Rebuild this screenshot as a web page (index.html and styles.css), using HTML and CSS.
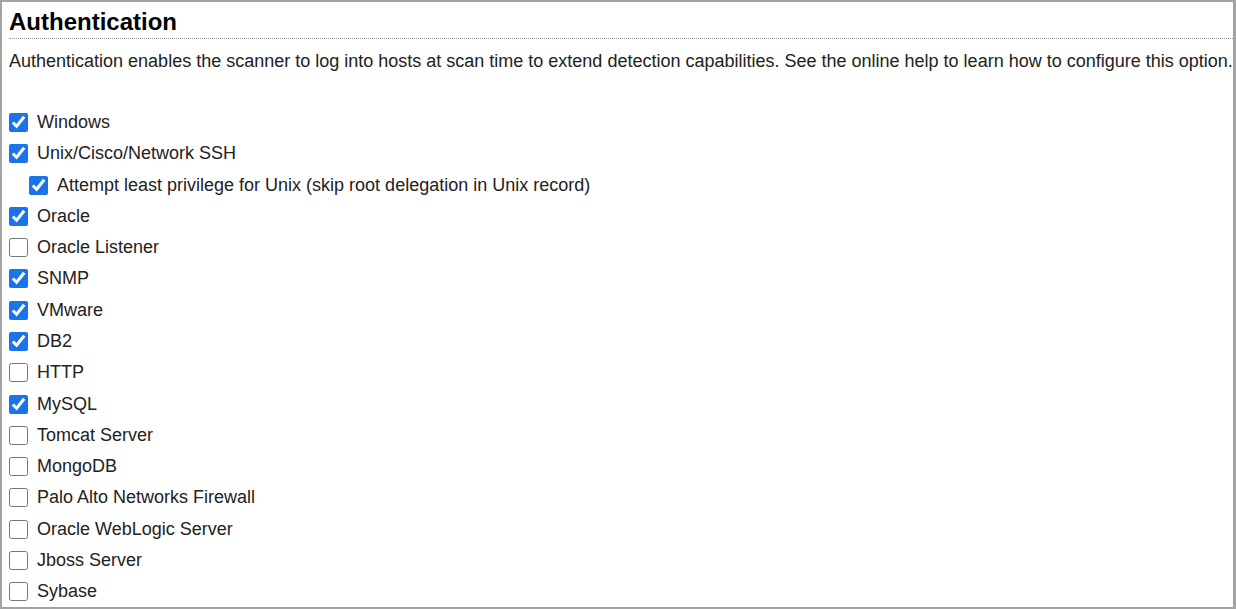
FILE: index.html
```html
<!DOCTYPE html>
<html lang="en">
<head>
  <meta charset="UTF-8">
  <title>Authentication</title>
  <link rel="stylesheet" href="styles.css">
</head>
<body>
  <div class="panel">
    <h2 class="section-title">Authentication</h2>
    <p class="intro">Authentication enables the scanner to log into hosts at scan time to extend detection capabilities. See the online help to learn how to configure this option.</p>
    <ul class="auth-list">
      <li><label><input type="checkbox" checked> Windows</label></li>
      <li><label><input type="checkbox" checked> Unix/Cisco/Network SSH</label></li>
      <li class="sub"><label><input type="checkbox" checked> Attempt least privilege for Unix (skip root delegation in Unix record)</label></li>
      <li><label><input type="checkbox" checked> Oracle</label></li>
      <li><label><input type="checkbox"> Oracle Listener</label></li>
      <li><label><input type="checkbox" checked> SNMP</label></li>
      <li><label><input type="checkbox" checked> VMware</label></li>
      <li><label><input type="checkbox" checked> DB2</label></li>
      <li><label><input type="checkbox"> HTTP</label></li>
      <li><label><input type="checkbox" checked> MySQL</label></li>
      <li><label><input type="checkbox"> Tomcat Server</label></li>
      <li><label><input type="checkbox"> MongoDB</label></li>
      <li><label><input type="checkbox"> Palo Alto Networks Firewall</label></li>
      <li><label><input type="checkbox"> Oracle WebLogic Server</label></li>
      <li><label><input type="checkbox"> Jboss Server</label></li>
      <li><label><input type="checkbox"> Sybase</label></li>
    </ul>
  </div>
</body>
</html>
```

FILE: styles.css
```css
html, body {
  margin: 0;
  padding: 0;
  background: #fff;
}
body {
  font-family: Arial, "Liberation Sans", sans-serif;
  color: #222;
}
.panel {
  box-sizing: border-box;
  width: 1236px;
  height: 609px;
  border: 2px solid #a3a3a3;
  border-right-width: 3px;
  padding: 0 0 0 7px;
  overflow: hidden;
}
.section-title {
  margin: 0;
  padding: 8px 0 4px 0;
  font-size: 24px;
  font-weight: bold;
  line-height: 24px;
  color: #000;
  border-bottom: 1px dotted #999;
}
.intro {
  margin: 11px 0 0 0;
  font-size: 18px;
  line-height: 22px;
}
.auth-list {
  list-style: none;
  margin: 35px 0 0 0;
  padding: 0;
}
.auth-list li {
  height: 31.27px;
  display: flex;
  align-items: center;
}
.auth-list label {
  display: flex;
  align-items: center;
  font-size: 18px;
}
.auth-list input {
  width: 19px;
  height: 19px;
  margin: 0 9px 0 0;
  accent-color: #1a73e8;
}
.auth-list li.sub {
  padding-left: 20px;
}
```
